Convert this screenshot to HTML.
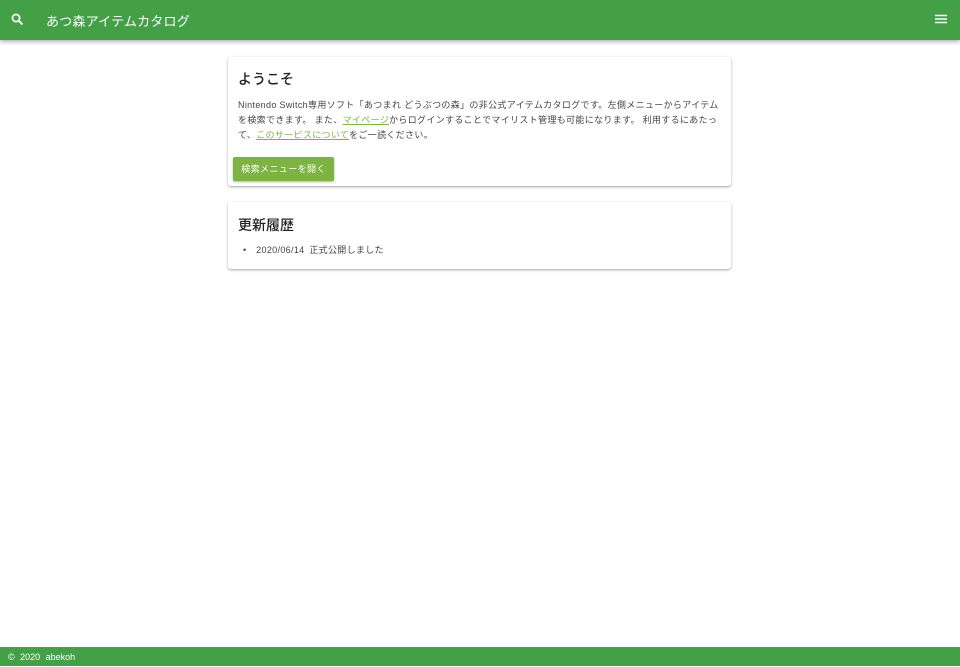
<!DOCTYPE html>
<html><head><meta charset="utf-8"><style>
*{box-sizing:border-box;margin:0;padding:0}
body{width:960px;height:666px;background:#fff;font-family:"Liberation Sans","Noto Sans CJK JP",sans-serif;color:#333;position:relative;overflow:hidden}
.hdr{position:absolute;left:0;top:0;width:960px;height:40px;background:#43a047;box-shadow:0 2px 4px rgba(0,0,0,.3);color:#fff}
.hdr .t{position:absolute;left:46px;top:11px;font-size:13px;letter-spacing:.2px}
.card{position:absolute;left:228px;width:503px;background:#fff;border-radius:3px;box-shadow:0 1px 3px rgba(0,0,0,.25),0 1px 1px rgba(0,0,0,.12)}
h2{position:absolute;left:10px;font-size:14px;font-weight:500;color:#222}
.p{position:absolute;left:10px;top:41px;font-size:9px;line-height:15px;color:#444;white-space:nowrap;letter-spacing:.33px}
.p a{color:#7cb342;text-decoration:underline}
.btn{position:absolute;left:5px;top:100px;width:101px;height:24px;background:#7cb342;color:#fff;font-size:9px;line-height:24px;text-align:center;border-radius:2px;box-shadow:0 1px 2px rgba(0,0,0,.3);letter-spacing:.4px}
.ft{position:absolute;left:0;top:647px;width:960px;height:19px;background:#43a047;color:#fff;font-size:9px;line-height:20px;padding-left:8px;word-spacing:3px}
</style></head><body>
<div class="hdr">
<svg style="position:absolute;left:11px;top:13px" width="13" height="13" viewBox="0 0 13 13"><circle cx="5" cy="5" r="3.6" fill="none" stroke="#fff" stroke-width="1.7"/><path d="M7.6 7.6L11.5 11.5" stroke="#fff" stroke-width="1.9"/></svg>
<div class="t">あつ森アイテムカタログ</div>
<svg style="position:absolute;left:935px;top:14px" width="12" height="10" viewBox="0 0 12 10"><path d="M0 1.5H12M0 5H12M0 8.5H12" stroke="#fff" stroke-width="1.4"/></svg>
</div>
<div class="card" style="top:57px;height:129px">
<h2 style="top:12px">ようこそ</h2>
<div class="p">Nintendo Switch専用ソフト「あつまれ どうぶつの森」の非公式アイテムカタログです。左側メニューからアイテム<br>を検索できます。 また、<a>マイページ</a>からログインすることでマイリスト管理も可能になります。 利用するにあたっ<br>て、<a>このサービスについて</a>をご一読ください。</div>
<div class="btn">検索メニューを開く</div>
</div>
<div class="card" style="top:202px;height:67px">
<h2 style="top:13px">更新履歴</h2>
<div class="p" style="top:41px;left:15px;word-spacing:2px">•&nbsp; 2020/06/14 正式公開しました</div>
</div>
<div class="ft">© 2020 abekoh</div>
</body></html>
